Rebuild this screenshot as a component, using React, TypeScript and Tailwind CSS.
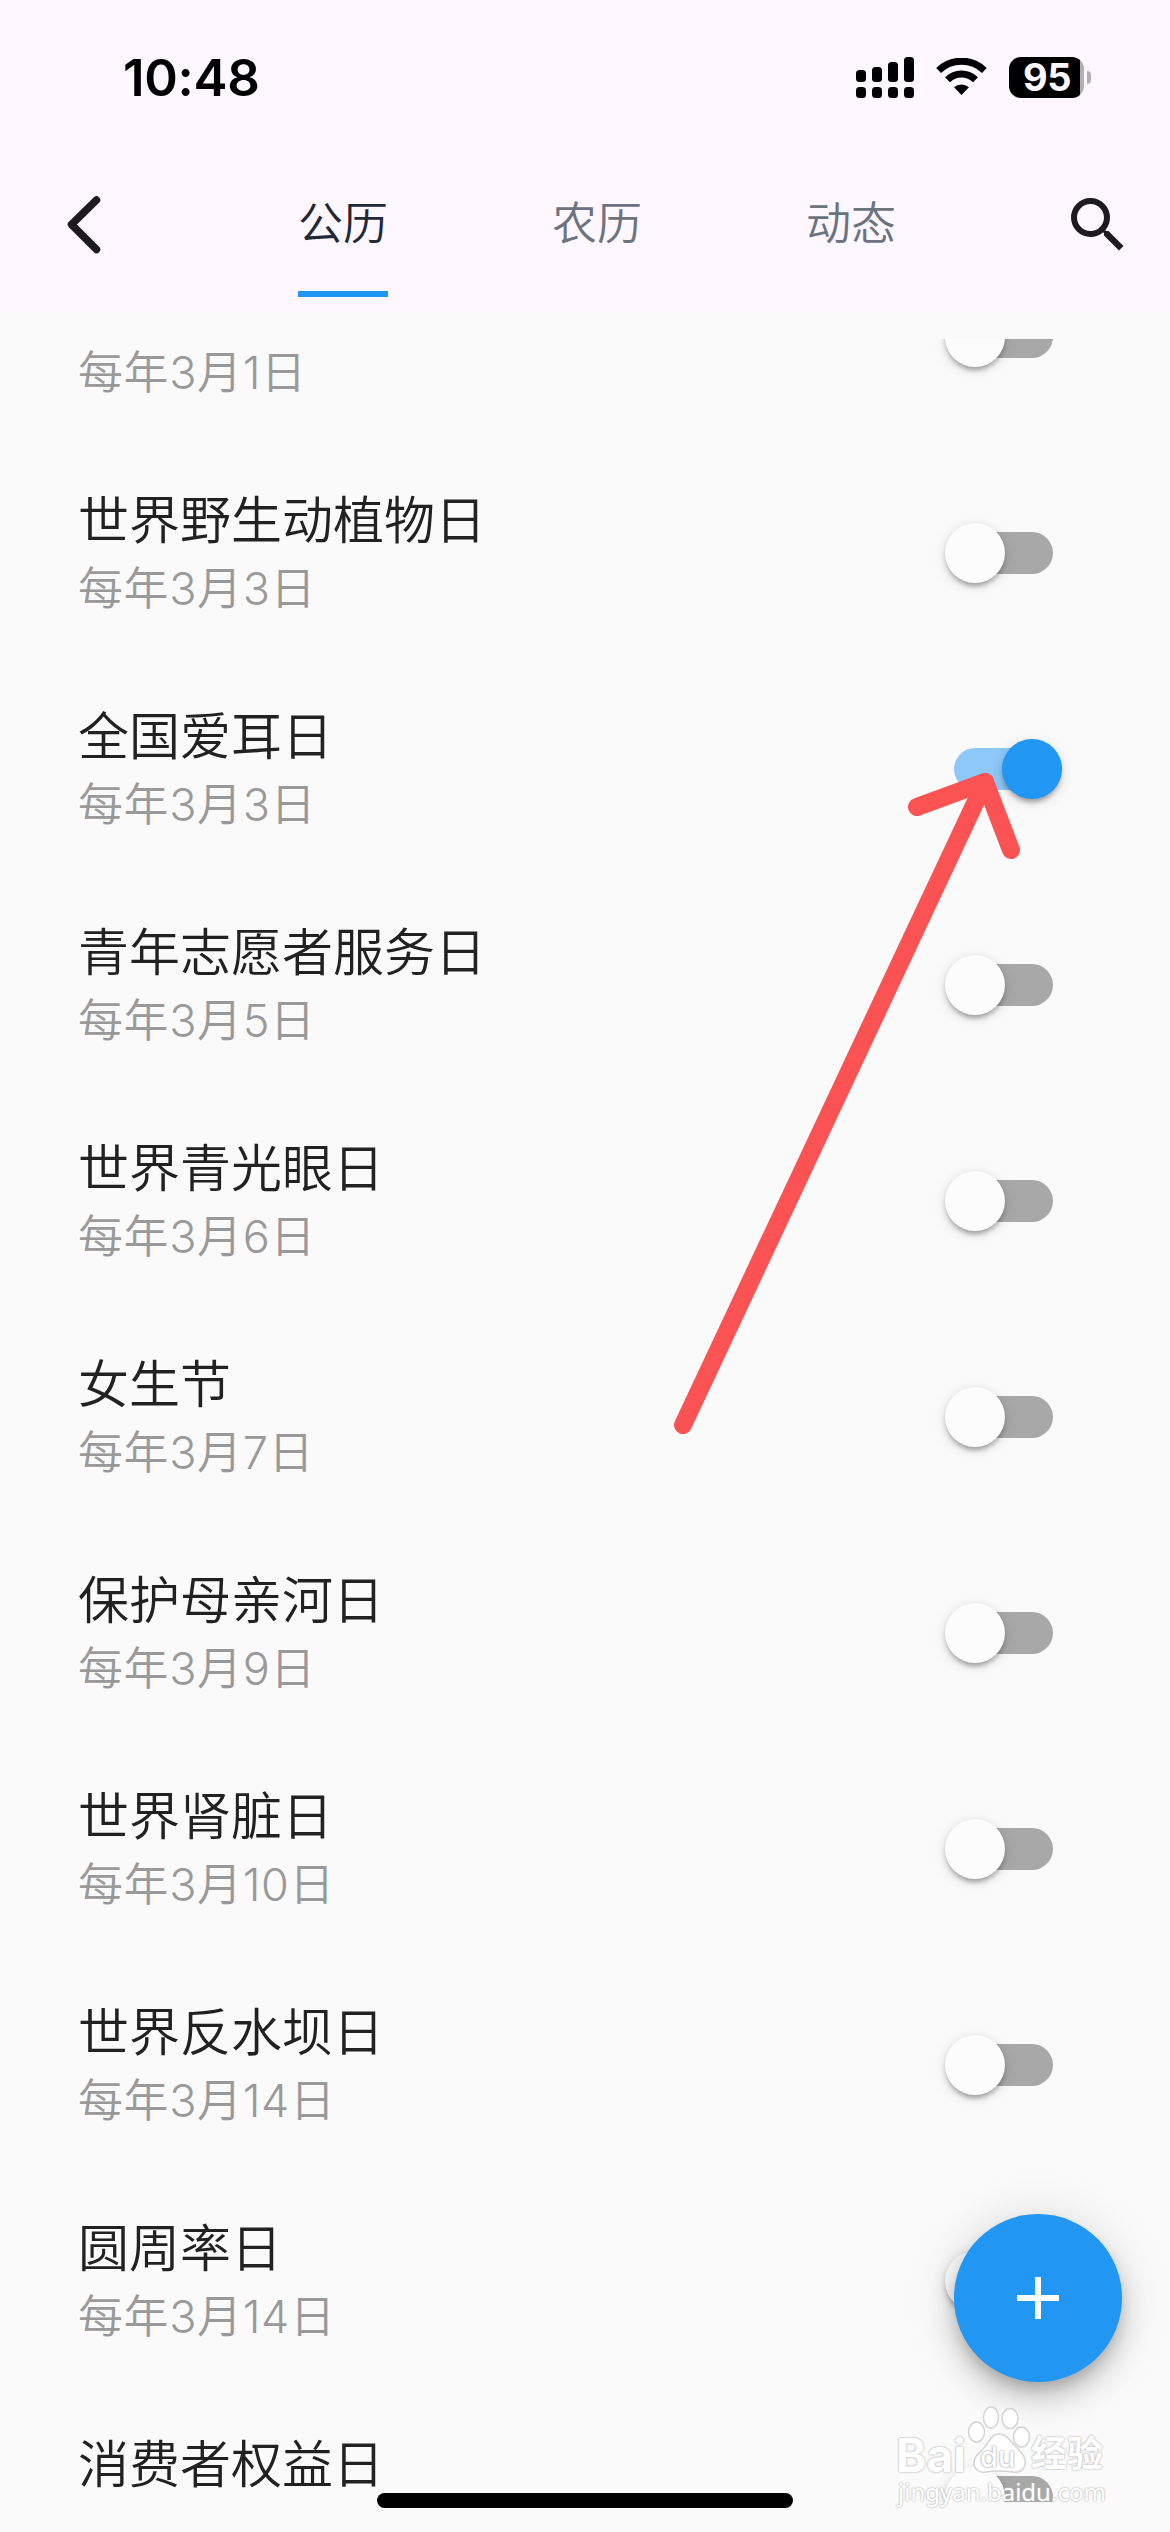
import React, { useState } from 'react';
import { MdSearch } from 'react-icons/md';

type Holiday = {
  id: number;
  name: string;
  date: string;
  enabled: boolean;
};

const HOLIDAYS: Holiday[] = [
  { id: 1, name: '', date: '每年3月1日', enabled: false },
  { id: 2, name: '世界野生动植物日', date: '每年3月3日', enabled: false },
  { id: 3, name: '全国爱耳日', date: '每年3月3日', enabled: true },
  { id: 4, name: '青年志愿者服务日', date: '每年3月5日', enabled: false },
  { id: 5, name: '世界青光眼日', date: '每年3月6日', enabled: false },
  { id: 6, name: '女生节', date: '每年3月7日', enabled: false },
  { id: 7, name: '保护母亲河日', date: '每年3月9日', enabled: false },
  { id: 8, name: '世界肾脏日', date: '每年3月10日', enabled: false },
  { id: 9, name: '世界反水坝日', date: '每年3月14日', enabled: false },
  { id: 10, name: '圆周率日', date: '每年3月14日', enabled: false },
  { id: 11, name: '消费者权益日', date: '', enabled: false },
];

const TABS = ['公历', '农历', '动态'];

const SignalIcon = () => (
  <svg width="59" height="48" viewBox="0 0 59 48">
    <rect x="0" y="13" width="10" height="12" rx="3.5" />
    <rect x="16" y="10" width="10" height="15" rx="3.5" />
    <rect x="32" y="5" width="10" height="20" rx="3.5" />
    <rect x="48" y="0" width="10" height="25" rx="3.5" />
    <rect x="0" y="30" width="10" height="11" rx="3.5" />
    <rect x="16" y="30" width="10" height="11" rx="3.5" />
    <rect x="32" y="30" width="10" height="11" rx="3.5" />
    <rect x="48" y="30" width="10" height="11" rx="3.5" />
  </svg>
);

const WifiIcon = () => (
  <svg width="51" height="38" viewBox="0 0 51 38">
    <path d="M25.5 37 L18 29.2 A11.5 11.5 0 0 1 33 29.2 Z" />
    <path d="M11.5 21.8 A20 20 0 0 1 39.5 21.8" fill="none" stroke="#000" strokeWidth="7" />
    <path d="M2.6 12.4 A33 33 0 0 1 48.4 12.4" fill="none" stroke="#000" strokeWidth="7" />
  </svg>
);

const StatusBar = () => (
  <div className="flex h-[156px] items-start justify-between pl-[123px] pr-[79px] text-black">
    <span className="mt-[48px] font-['Inter'] text-[51px] leading-[60px] font-semibold tracking-[-0.3px]">10:48</span>
    <div className="mt-[57px] flex items-start">
      <SignalIcon />
      <div className="ml-[21px] mt-[1px]">
        <WifiIcon />
      </div>
      <div className="ml-[22px] flex h-[41px] w-[75px] items-center rounded-[12px] bg-linear-to-r from-black from-[71px] to-[#b3afb3] to-[71px] pl-[14px]">
        <span className="font-['Inter'] text-[38px] leading-[41px] font-bold tracking-[-0.5px] text-[#fef7ff]">95</span>
      </div>
      <div className="ml-[3px] mt-[14px] h-[13px] w-[4px] rounded-r-full bg-[#b3afb3]" />
    </div>
  </div>
);

interface SwitchProps {
  checked: boolean;
  onChange: () => void;
}

const Switch: React.FC<SwitchProps> = ({ checked, onChange }) => (
  <button
    type="button"
    role="switch"
    aria-checked={checked}
    onClick={onChange}
    className={`flex h-[42px] w-[99px] items-center rounded-full ${checked ? 'bg-[#8ec8f8]' : 'bg-[#a8a8a8]'}`}
  >
    <span
      className={`size-[60px] shrink-0 rounded-full shadow-[0_6px_5px_-3px_rgba(0,0,0,0.2),0_3px_5px_0_rgba(0,0,0,0.14),0_3px_14px_0_rgba(0,0,0,0.12)] ${checked ? 'ml-[48px] bg-[#2196f3]' : '-ml-[9px] bg-[#fcfcfc]'}`}
    />
  </button>
);

export default function App() {
  const [activeTab, setActiveTab] = useState('公历');
  const [holidays, setHolidays] = useState(HOLIDAYS);

  const toggle = (id: number) => {
    setHolidays(holidays.map((h) => (h.id === id ? { ...h, enabled: !h.enabled } : h)));
  };

  return (
    <div className="relative flex h-[2532px] w-[1170px] flex-col overflow-hidden bg-[#fafafa] font-['Inter','Noto_Sans_CJK_SC',sans-serif]">
      <header className="h-[309px] bg-[#fef7ff]">
        <StatusBar />

        {/* Nav bar */}
        <div className="flex h-[141px] items-start justify-between pl-[60px] pr-[36px]">
          <button type="button" className="mt-[32px] w-[72px]">
            <svg width="48" height="72" viewBox="0 0 48 72" fill="none" stroke="#1d1b20" strokeWidth="7.5" strokeLinecap="round" strokeLinejoin="round">
              <path d="M36.5 12 L11.5 36.5 L36.5 61.5" />
            </svg>
          </button>
          <nav className="flex gap-[164px]">
            {TABS.map((tab) => (
              <button
                key={tab}
                type="button"
                onClick={() => setActiveTab(tab)}
                className={`flex h-[141px] w-[90px] flex-col justify-between pt-[38px] text-[45px] leading-[60px] font-[350] whitespace-nowrap ${activeTab === tab ? 'text-[#1f2937]' : 'text-[#6b7280]'}`}
              >
                <span>{tab}</span>
                <span className={`h-[6px] w-full ${activeTab === tab ? 'bg-[#2196f3]' : 'bg-transparent'}`} />
              </button>
            ))}
          </nav>
          <button type="button" className="mt-[33px] text-[#1d1b20]">
            <MdSearch size={72} />
          </button>
        </div>
      </header>

      {/* Holiday list */}
      <main className="mt-[30px] h-[2163px] overflow-hidden">
        <div className="-mt-[110px]">
          {holidays.map((h) => (
            <div key={h.id} className="flex h-[216px] items-center justify-between pl-[78px] pr-[117px]">
              <div className="flex flex-col">
                <span className="h-[72px] text-[51px] leading-[72px] font-[350] text-[#212121]">{h.name}</span>
                <span className="h-[64px] text-[45px] leading-[64px] font-[350] tracking-[0.6px] text-[#999]">{h.date}</span>
              </div>
              <Switch checked={h.enabled} onChange={() => toggle(h.id)} />
            </div>
          ))}
        </div>
      </main>

      {/* Pointer arrow */}
      <svg className="absolute left-[660px] top-[760px]" width="380" height="690" viewBox="660 760 380 690" fill="none" stroke="#fb5353" strokeWidth="18" strokeLinecap="round" strokeLinejoin="round">
        <path d="M683 1425 L985 782" />
        <path d="M917 807 L985 782 L1011 850" />
      </svg>

      {/* Add button */}
      <button
        type="button"
        className="absolute left-[954px] top-[2214px] flex size-[168px] items-center justify-center rounded-full bg-[#2196f3] shadow-[0_9px_15px_-3px_rgba(0,0,0,0.2),0_18px_30px_0_rgba(0,0,0,0.14),0_3px_54px_0_rgba(0,0,0,0.12)]"
      >
        <svg width="42" height="42" viewBox="0 0 42 42" fill="#fff">
          <path d="M18 0h6v18h18v6H24v18h-6V24H0v-6h18z" />
        </svg>
      </button>

      {/* Home indicator */}
      <div className="absolute bottom-[24px] left-[377px] h-[15px] w-[416px] rounded-full bg-black" />

      {/* Watermark */}
      <div className="absolute left-[896px] top-[2404px] h-[110px] w-[220px] text-white [text-shadow:0_0_2px_#bbb,0_0_2px_#bbb]">
        <span className="absolute left-0 top-[28px] text-[46px] leading-[46px] font-bold">Bai</span>
        <svg className="absolute left-[70px] top-0" width="66" height="72" viewBox="0 0 66 72" fill="#fff" stroke="#d4d4d4" strokeWidth="1.5">
          <ellipse cx="10.5" cy="28" rx="8" ry="10" />
          <ellipse cx="25" cy="13.5" rx="7.5" ry="10.5" />
          <ellipse cx="44" cy="14.5" rx="8" ry="10" />
          <ellipse cx="55.5" cy="33" rx="8" ry="10" />
          <path d="M33 30c8 0 12 8 18 14s9 10 8 16c-1 7-7 9-13 8-5-1-8-1-13-1s-8 0-13 1c-6 1-12-2-12-9 0-6 4-9 9-14 6-6 8-15 16-15z" />
        </svg>
        <span className="absolute left-[84px] top-[35px] text-[29px] leading-[36px] font-medium [text-shadow:0_0_2px_#999,0_0_2px_#bbb]">du</span>
        <span className="absolute left-[135px] top-[30px] text-[36px] leading-[40px] font-bold">经验</span>
        <span className="absolute left-[2px] top-[73px] font-['Noto_Sans'] text-[24px] leading-[30px]">jingyan.baidu.com</span>
      </div>
    </div>
  );
}
